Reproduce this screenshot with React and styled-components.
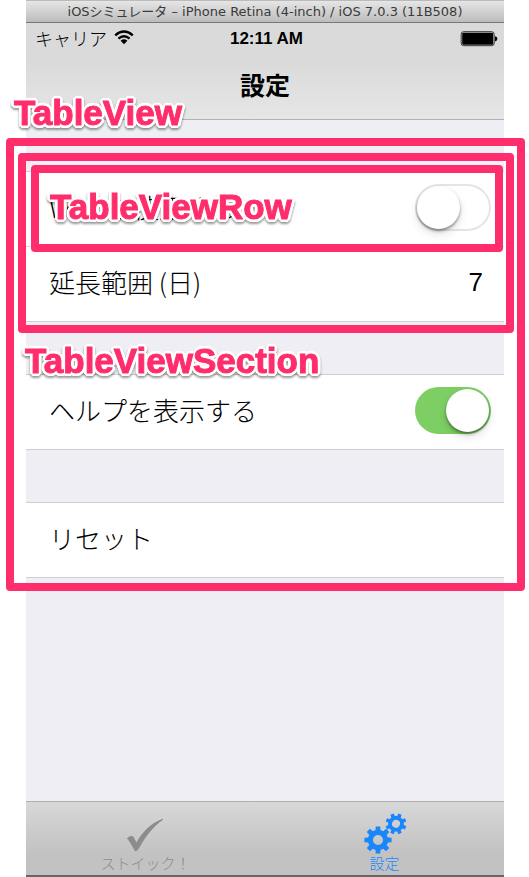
import React from "react";
import styled, { createGlobalStyle } from "styled-components";

const PINK = "#ff2d6b";
const LATIN = '"Liberation Sans", "Noto Sans CJK JP", sans-serif';
const JAPANESE = '"Noto Sans CJK JP", sans-serif';

const GlobalStyle = createGlobalStyle`
  *, *::before, *::after { box-sizing: border-box; }
  body { margin: 0; background: #fff; color: #000; font-family: ${LATIN}; }
  button, input { font: inherit; color: inherit; }
`;

const Page = styled.div`
  min-height: 100vh;
  padding: 0 25px 0 26px;
  display: flex;
  overflow: hidden;
`;

const Simulator = styled.main`
  flex: 1;
  min-width: 0;
  display: flex;
  flex-direction: column;
  background: #efeef4;
  border-bottom: 2px solid #666;
`;

const WindowTitle = styled.div`
  height: 23px;
  line-height: 22px;
  border-top: 1px solid #bbb;
  border-bottom: 1px solid #777;
  background: linear-gradient(#e6e6e6, #bcbcbc);
  color: #3a3a3a;
  font-family: "DejaVu Sans", "Noto Sans CJK JP", sans-serif;
  font-size: 13px;
  text-align: center;
  white-space: nowrap;
`;

const Header = styled.header`
  height: 97px;
  border-bottom: 1px solid #b2b2b2;
  background: linear-gradient(#dadada 40%, #e6e6e6);
`;

const StatusBar = styled.div`
  display: grid;
  grid-template-columns: 1fr auto 1fr;
  align-items: center;
  height: 31px;
  padding: 0 6px 0 9px;
`;

const Carrier = styled.span`
  display: flex;
  align-items: center;
  gap: 7px;
  padding-bottom: 2px;
  font-family: ${JAPANESE};
  font-size: 18px;
  font-weight: 300;
`;

const Clock = styled.time`
  font-size: 17px;
  font-weight: 700;
`;

const BatterySvg = styled.svg`
  justify-self: end;
`;

const Title = styled.h1`
  margin: 0;
  padding-top: 9px;
  font-size: 25px;
  line-height: 46px;
  font-weight: 700;
  text-align: center;
`;

const TableView = styled.div`
  position: relative;
  flex: 1;
`;

const Sections = styled.div`
  position: relative;
  display: flex;
  flex-direction: column;
  gap: 52px;
  padding-top: 51px;
`;

const Section = styled.section`
  position: relative;
  background: #fff;
  border: solid #cfced3;
  border-width: 1px 0;
`;

const Row = styled.div`
  position: relative;
  display: flex;
  align-items: center;
  justify-content: space-between;
  height: 74px;
  padding: 0 13px 4px 23px;
  font-family: ${JAPANESE};
  font-size: 26px;
  line-height: 38px;
  font-weight: 300;

  & + & {
    height: 75px;
    border-top: 1px solid #d9d8dc;
  }
`;

const Value = styled.output`
  padding-right: 8px;
  font-family: ${LATIN};
`;

const ResetButton = styled.button`
  flex: 1;
  padding: 0;
  border: 0;
  background: none;
  text-align: left;
`;

const Switch = styled.input`
  appearance: none;
  flex: none;
  width: 76px;
  height: 47px;
  margin: 0;
  padding: 2px;
  display: flex;
  border-radius: 24px;
  background: #fff;
  box-shadow: inset 0 0 0 2px #e5e5e5;

  &::before {
    content: "";
    width: 43px;
    height: 43px;
    border-radius: 50%;
    background: #fff;
    box-shadow: 0 2px 3px rgba(0, 0, 0, 0.4), 0 5px 10px rgba(0, 0, 0, 0.12);
  }

  &:checked {
    justify-content: flex-end;
    background: #7dcf64;
    box-shadow: none;
  }
`;

const Frame = styled.div`
  position: absolute;
  z-index: 1;
  inset: ${(p) => p.$inset};
  border: 8px solid ${PINK};
  border-radius: 4px;
  pointer-events: none;
`;

const Tag = styled.span`
  position: absolute;
  z-index: 2;
  top: ${(p) => p.$top};
  left: ${(p) => p.$left};
  color: ${PINK};
  font-family: "Liberation Sans", sans-serif;
  font-size: 35px;
  line-height: 40px;
  font-weight: 700;
  -webkit-text-stroke: 1px ${PINK};
  text-shadow:
    3px 0 #fff, -3px 0 #fff, 0 3px #fff, 0 -3px #fff,
    2px 2px #fff, -2px 2px #fff, 2px -2px #fff, -2px -2px #fff,
    3px 1px #fff, -3px 1px #fff, 3px -1px #fff, -3px -1px #fff,
    1px 3px #fff, -1px 3px #fff, 1px -3px #fff, -1px -3px #fff;
  filter: drop-shadow(0 2px 1px rgba(0, 0, 0, 0.4));
  pointer-events: none;
`;

const TabBar = styled.nav`
  display: grid;
  grid-template-columns: 1fr 1fr;
  height: 74px;
  border-top: 1px solid #b0b0b0;
  background: linear-gradient(#d8d8d8, #c2c2c2 70%);
`;

const Tab = styled.button`
  display: flex;
  flex-direction: column;
  align-items: center;
  justify-content: flex-end;
  padding: 0 0 2px;
  border: 0;
  background: none;
  color: ${(p) => (p.$active ? "#1a86fb" : "#8c8c8c")};
  font-family: ${JAPANESE};
  font-size: 15px;
  line-height: 20px;
  font-weight: 300;
`;

const Wifi = () => (
  <svg width="20" height="15" viewBox="0 0 20 15" aria-hidden="true">
    <g fill="none" stroke="#000" strokeWidth="2.4">
      <path d="M1.2 5.3Q10-2.3 18.8 5.3" />
      <path d="M4.4 8.7Q10 3.9 15.6 8.7" />
    </g>
    <path d="M6.6 10.7Q10 7.9 13.4 10.7L10 14.2Z" />
  </svg>
);

const Battery = () => (
  <BatterySvg width="38" height="16" viewBox="0 0 38 16" aria-label="Battery" role="img">
    <rect x="1.2" y="0.7" width="33" height="14" rx="2.5" fill="none" stroke="#222" strokeWidth="0.9" />
    <rect x="2.2" y="1.7" width="31" height="12" rx="1.2" />
    <path d="M35 5.2Q37.4 5.6 37.4 7.8T35 10.4Z" />
  </BatterySvg>
);

const Check = () => (
  <svg width="40" height="35" viewBox="0 0 40 35" aria-hidden="true">
    <path
      fill="#8c8c8c"
      d="M1 20.5C2.5 18 6.5 17 7.6 19L10.5 24.5C17 13 25 5.5 36.5 .8L37 1.8C28 8 20 17.5 13.5 29.5C12.5 31.5 10 34 9.2 33.2C7.5 31 4 23.5 1 20.5Z"
    />
  </svg>
);

const gear = (cx, cy, outer, inner, hole) => {
  const points = [];
  for (let i = 0; i < 8; i += 1) {
    [[-0.24, inner], [-0.17, outer], [0.17, outer], [0.24, inner]].forEach(([d, r]) => {
      const a = (i * Math.PI) / 4 + d;
      points.push(`${(cx + r * Math.sin(a)).toFixed(2)} ${(cy - r * Math.cos(a)).toFixed(2)}`);
    });
  }
  return `M${points.join("L")}ZM${cx - hole} ${cy}a${hole} ${hole} 0 1 0 ${2 * hole} 0a${hole} ${hole} 0 1 0 ${-2 * hole} 0Z`;
};

const Gears = () => (
  <svg width="44" height="40" viewBox="0 0 44 40" overflow="visible" aria-hidden="true">
    <g fill="#1a86fb" fillRule="evenodd">
      <path d={gear(15, 27, 13.8, 10.2, 5)} />
      <path d={gear(33, 10.8, 10.6, 7.9, 4)} transform="rotate(22.5 33 10.8)" />
    </g>
  </svg>
);

export default function App() {
  return (
    <Page>
      <GlobalStyle />
      <Simulator>
        <WindowTitle>iOSシミュレータ – iPhone Retina (4-inch) / iOS 7.0.3 (11B508)</WindowTitle>
        <Header>
          <StatusBar>
            <Carrier>
              キャリア
              <Wifi />
            </Carrier>
            <Clock>12:11 AM</Clock>
            <Battery />
          </StatusBar>
          <Title>設定</Title>
        </Header>
        <TableView>
          <Sections>
            <Frame $inset="18px -21px -13px -20px" />
            <Tag $top="-27px" $left="-12px">TableView</Tag>
            <Section>
              <Frame $inset="-19px -10px -12px -8px" />
              <Tag $top="169px" $left="-1px">TableViewSection</Tag>
              <Row>
                <label htmlFor="wifi">Wi-Fiを使用する</label>
                <Switch id="wifi" type="checkbox" />
                <Frame $inset="-7px 1px -6px 5px" />
                <Tag $top="15px" $left="24px">TableViewRow</Tag>
              </Row>
              <Row>
                <label htmlFor="range">延長範囲 (日)</label>
                <Value id="range">7</Value>
              </Row>
            </Section>
            <Section>
              <Row>
                <label htmlFor="help">ヘルプを表示する</label>
                <Switch id="help" type="checkbox" defaultChecked />
              </Row>
            </Section>
            <Section>
              <Row>
                <ResetButton type="button">リセット</ResetButton>
              </Row>
            </Section>
          </Sections>
        </TableView>
        <TabBar>
          <Tab type="button">
            <Check />
            ストイック！
          </Tab>
          <Tab type="button" $active aria-current="page">
            <Gears />
            設定
          </Tab>
        </TabBar>
      </Simulator>
    </Page>
  );
}
